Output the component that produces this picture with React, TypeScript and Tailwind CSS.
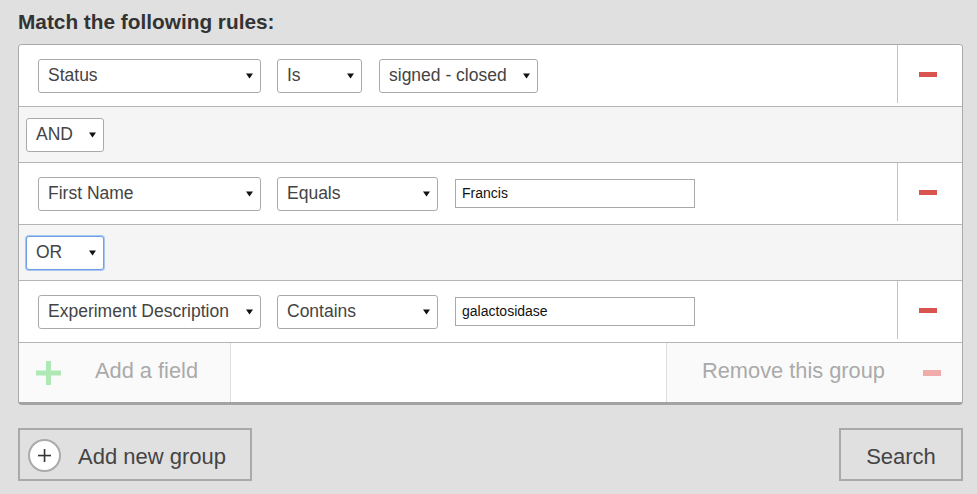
import React from "react";

const font = { fontFamily: '"Liberation Sans", Arial, sans-serif' };

function Arrow() {
  return (
    <svg width="7" height="6" viewBox="0 0 7 6" className="shrink-0">
      <path d="M0 0.5 L7 0.5 L3.5 5.5 Z" fill="#111" />
    </svg>
  );
}

function Sel({ label, w, focused }: { label: string; w: string; focused?: boolean }) {
  return (
    <div
      className={`flex items-center justify-between h-[34px] rounded-[3px] bg-white pl-[9px] pr-[7px] text-[17.5px] text-[#444] ${w} ${
        focused ? "border border-[#6f9fe6] shadow-[0_0_0_1px_#a9c6f0]" : "border border-[#aaaaaa]"
      }`}
    >
      <span className="whitespace-nowrap">{label}</span>
      <Arrow />
    </div>
  );
}

function Input({ value }: { value: string }) {
  return (
    <div className="flex items-center h-[29px] w-[240px] border border-[#aaaaaa] bg-white pl-[6px] text-[14px] text-[#111]">
      {value}
    </div>
  );
}

function Minus() {
  return <div className="w-[18px] h-[5px] bg-[#d9534f]" />;
}

function RuleRow({ children }: { children: React.ReactNode }) {
  return (
    <div className="flex h-[62px] border-b border-[#b5b5b5] bg-white">
      <div className="flex-1 flex items-center pl-[19px]">{children}</div>
      <div className="w-[65px] mb-[3px] border-l border-[#c4c4c4] flex items-center justify-center pr-[4px]">
        <Minus />
      </div>
    </div>
  );
}

function ConnRow({ label, focused }: { label: string; focused?: boolean }) {
  return (
    <div className="flex items-center h-[56px] border-b border-[#b5b5b5] bg-[#f5f5f5] pl-[7px]">
      <Sel label={label} w="w-[78px]" focused={focused} />
    </div>
  );
}

export default function App() {
  return (
    <div className="w-[977px] h-[494px] bg-[#e0e0e0] pl-[18px] pt-[10px]" style={font}>
      <div className="h-[24px] leading-[24px] text-[20.8px] font-bold text-[#333]">Match the following rules:</div>
      <div className="mt-[10px] w-[945px] border border-b-[3px] border-[#aaaaaa] border-b-[#a3a3a3] rounded-[4px] overflow-hidden bg-white">
        <RuleRow>
          <Sel label="Status" w="w-[223px]" />
          <div className="ml-[16px]">
            <Sel label="Is" w="w-[85px]" />
          </div>
          <div className="ml-[17px]">
            <Sel label="signed - closed" w="w-[159px]" />
          </div>
        </RuleRow>
        <ConnRow label="AND" />
        <RuleRow>
          <Sel label="First Name" w="w-[223px]" />
          <div className="ml-[16px]">
            <Sel label="Equals" w="w-[161px]" />
          </div>
          <div className="ml-[17px]">
            <Input value="Francis" />
          </div>
        </RuleRow>
        <ConnRow label="OR" focused />
        <RuleRow>
          <Sel label="Experiment Description" w="w-[223px]" />
          <div className="ml-[16px]">
            <Sel label="Contains" w="w-[161px]" />
          </div>
          <div className="ml-[17px]">
            <Input value="galactosidase" />
          </div>
        </RuleRow>
        <div className="flex h-[59px] bg-white">
          <div className="w-[212px] bg-[#fafafa] border-r border-[#dddddd] flex items-center pl-[17px]">
            <svg width="25" height="24" viewBox="0 0 25 24" className="shrink-0">
              <rect x="10" y="0" width="5" height="24" fill="#aee9b5" />
              <rect x="0" y="9.5" width="25" height="5" fill="#aee9b5" />
            </svg>
            <span className="ml-[34px] text-[21.8px] text-[#aaaaaa] whitespace-nowrap -mt-[2px]">Add a field</span>
          </div>
          <div className="flex-1" />
          <div className="w-[296px] bg-[#fafafa] border-l border-[#dddddd] flex items-center pl-[35px] pr-[21px]">
            <span className="text-[21.8px] text-[#aaaaaa] whitespace-nowrap -mt-[2px]">Remove this group</span>
            <div className="ml-auto w-[18px] h-[6px] bg-[#f0abab]" />
          </div>
        </div>
      </div>
      <div className="mt-[23px] w-[945px] flex justify-between">
        <div className="h-[53px] w-[234px] border-2 border-[#a9a9a9] flex items-center pl-[8px]">
          <div className="w-[33px] h-[33px] rounded-full border-2 border-[#aaaaaa] bg-white flex items-center justify-center shrink-0 mt-[1px]">
            <svg width="13" height="13" viewBox="0 0 13 13">
              <rect x="5.75" y="0" width="1.6" height="13" fill="#333" />
              <rect x="0" y="5.75" width="13" height="1.6" fill="#333" />
            </svg>
          </div>
          <span className="ml-[17px] text-[22px] text-[#444] whitespace-nowrap mt-[3px]">Add new group</span>
        </div>
        <div className="h-[53px] w-[124px] border-2 border-[#a9a9a9] flex items-center justify-center">
          <span className="text-[22px] text-[#444] mt-[3px]">Search</span>
        </div>
      </div>
    </div>
  );
}
